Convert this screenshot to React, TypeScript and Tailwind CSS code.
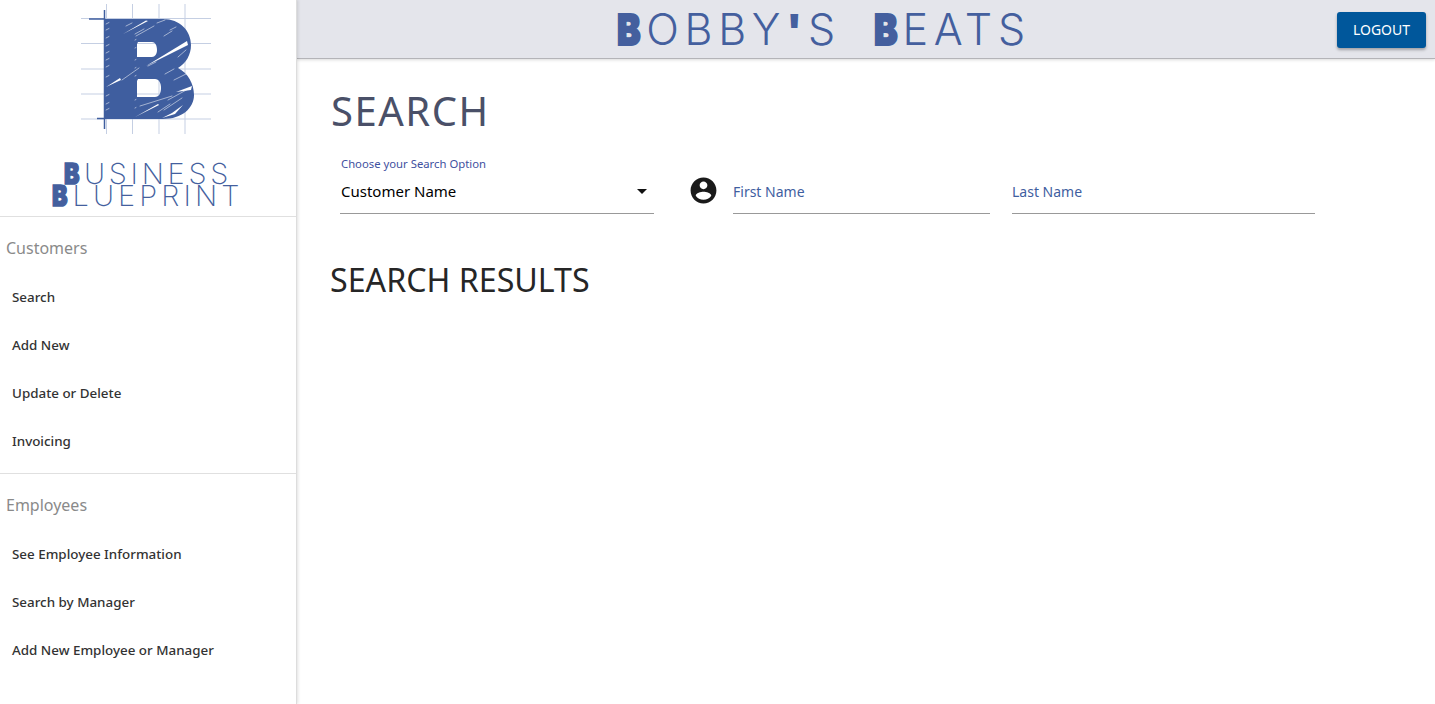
const blue = "text-[#445f9e]";

function Logo() {
    // big white scratches across the B, thin at one end
    const wedges = [
        "M123 34 L146 20.5 L148 21 Z",
        "M146 66 L187 41 L188 45 Z",
        "M106 87 L120 78 L121 80 Z",
        "M162 118 L175 114 L183 105 L172 113 Z",
        "M135 117 L158 104 L159 105 Z",
        "M176 92 L192 86 L191 90 Z",
    ];
    const scratches = [
        "M136 36 L154 26", "M157 23 L165 20", "M135 34 L144 29", "M170 30 L176 27", "M164 36 L172 31",
        "M122 80 L139 68", "M140 106 L172 96", "M158 112 L170 104", "M174 80 L186 74", "M165 74 L174 69",
        "M148 66 L156 62", "M178 57 L186 50", "M164 110 L182 98", "M168 100 L190 88", "M126 26 L132 23",
    ];
    const ticks = [24, 30, 38, 46, 53, 60, 67, 77, 96, 104, 110];
    return (
        <svg width="296" height="140" viewBox="0 0 296 140" className="block">
            <g stroke="#c5cfe3" strokeWidth="1">
                {[18.5, 43.5, 69, 94, 119].map((y) => (
                    <line key={y} x1="81" x2="211" y1={y} y2={y} />
                ))}
                {[106.5, 132.5, 159, 185].map((x) => (
                    <line key={x} x1={x} x2={x} y1="4" y2="134" />
                ))}
            </g>
            <path
                fillRule="evenodd"
                fill="#3f5e9f"
                d="M104 19 H163 C180 19 191 31 191 45 C191 55 186 63 178 68 C188 73 194 84 194 95 C194 108 182 119 163 119 H104 Z M138 42 L137 44 V57 H152 C155 57 157 54 157 50 C157 45 155 42 152 42 Z M138 79 L137 81 V97 H155 C159 97 161 93 161 88 C161 83 159 79 155 79 Z"
            />
            <g fill="#ffffff">
                {wedges.map((d) => (
                    <path key={d} d={d} />
                ))}
            </g>
            <g stroke="#ffffff" strokeWidth="0.7" strokeLinecap="round" opacity="0.75">
                {scratches.map((d) => (
                    <path key={d} d={d} />
                ))}
                {ticks.map((y) => (
                    <path key={y} d={`M106 ${y} L109 ${y - 1.5}`} />
                ))}
                {[40, 48, 60, 68, 76, 100, 108].map((y) => (
                    <path key={y} d={`M135 ${y} L136 ${y - 0.5}`} />
                ))}
            </g>
            <g stroke="#3f5e9f" strokeWidth="1.5">
                <line x1="104.5" x2="104.5" y1="10" y2="129" />
                <line x1="89" x2="104" y1="19" y2="19" />
                <line x1="97" x2="104" y1="118.5" y2="118.5" />
            </g>
        </svg>
    );
}

// solid, slightly squeezed capital used by both wordmarks
function LogoB() {
    return (
        <span className="inline-block w-[20px] text-left origin-left scale-x-[0.8] font-black [-webkit-text-stroke:1.5px_#445f9e]">B</span>
    );
}

function TitleB() {
    return (
        <span className="inline-block w-[29px] text-left origin-left scale-x-[0.82] font-black [-webkit-text-stroke:2px_#445f9e]">B</span>
    );
}

function NavSection({ title, items }: { title: string; items: string[] }) {
    return (
        <div className="py-2">
            <div className="h-12 flex items-center px-[6px] pb-[2px] text-base text-[#8a8a8a]">{title}</div>
            {items.map((item) => (
                <div key={item} className="h-12 flex items-center px-3 pt-px text-[13.4px] font-medium text-[#333333]">
                    {item}
                </div>
            ))}
        </div>
    );
}

export default function App() {
    return (
        <div className="h-screen overflow-hidden flex bg-white font-['Noto_Sans','Open_Sans',sans-serif]">
            {/* Sidebar */}
            <aside className="w-[297px] shrink-0 border-r border-[#dddddd] shadow-[1px_0_3px_rgba(0,0,0,0.12)] z-10 bg-white">
                <Logo />
                <div className={`h-[76px] flex flex-col items-center pt-[23px] font-['Inter',sans-serif] font-[250] ${blue} text-[29px] leading-[22px]`}>
                    <div className="tracking-[3.7px]">
                        <LogoB />USINESS
                    </div>
                    <div className="tracking-[4.1px]">
                        <LogoB />LUEPRINT
                    </div>
                </div>
                <div className="border-t border-[#e0e0e0]">
                    <NavSection title="Customers" items={["Search", "Add New", "Update or Delete", "Invoicing"]} />
                </div>
                <div className="border-t border-[#e0e0e0]">
                    <NavSection
                        title="Employees"
                        items={["See Employee Information", "Search by Manager", "Add New Employee or Manager"]}
                    />
                </div>
            </aside>

            <div className="flex-1 min-w-0">
                {/* Top bar */}
                <header className="h-[59px] bg-[#e4e5eb] border-b border-[#b4b4b8] shadow-[0_1px_3px_rgba(0,0,0,0.15)] flex items-center pr-[9px]">
                    <div className={`flex-1 text-center pl-[14px] font-['Inter',sans-serif] font-light ${blue} text-[43px] leading-none tracking-[5.7px]`}>
                        <TitleB />OBBY<span className="font-black">'</span>S{" "}
                        <span className="ml-[15px]"><TitleB /></span>EATS
                    </div>
                    <button className="w-[89px] h-9 mt-px rounded-[3px] bg-[#00579b] text-white text-sm shadow-[0_2px_3px_rgba(0,0,0,0.3)]">
                        LOGOUT
                    </button>
                </header>

                {/* Main content */}
                <main className="pl-[34px] pt-[25px]">
                    <h1 className="text-[40px] leading-[54px] tracking-[1.5px] text-[#4a5068]">SEARCH</h1>

                    <div className="flex items-end mt-[19px] ml-[9px]">
                        <div className="w-[314px] border-b border-[#999999] h-[57px]">
                            <div className="text-[11.3px] leading-4 pl-px -mt-px text-[#3f51a0]">Choose your Search Option</div>
                            <div className="flex items-center justify-between mt-[9px]">
                                <span className="text-[15px] leading-5 pl-px text-black">Customer Name</span>
                                <svg width="10" height="5" viewBox="0 0 10 5" className="mr-[7px]">
                                    <path d="M0 0 L10 0 L5 5 Z" fill="#111111" />
                                </svg>
                            </div>
                        </div>
                        <svg width="31" height="31" viewBox="0 0 24 24" className="ml-[33.5px] mr-[14.5px] mb-[8px]" fill="#1a1a1a">
                            <path d="M12 2C6.48 2 2 6.48 2 12s4.48 10 10 10 10-4.48 10-10S17.52 2 12 2zm0 3c1.66 0 3 1.34 3 3s-1.34 3-3 3-3-1.34-3-3 1.34-3 3-3zm0 14.2c-2.5 0-4.71-1.28-6-3.22.03-1.99 4-3.08 6-3.08 1.99 0 5.97 1.09 6 3.08-1.29 1.94-3.5 3.22-6 3.22z" />
                        </svg>
                        <div className="w-[257px] h-[44px] border-b border-[#999999] text-sm text-[#3f5e9f] pt-[12px]">First Name</div>
                        <div className="w-[303px] h-[44px] ml-[22px] border-b border-[#999999] text-sm text-[#3f5e9f] pt-[12px]">Last Name</div>
                    </div>

                    <h2 className="text-[32.2px] leading-[44px] mt-[44px] -ml-[1px] text-[#262626]">SEARCH RESULTS</h2>
                </main>
            </div>
        </div>
    );
}
